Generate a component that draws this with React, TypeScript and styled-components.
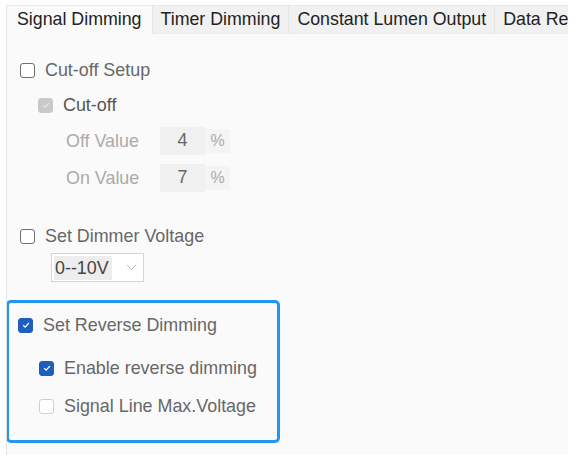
import React from "react";
import styled, { createGlobalStyle } from "styled-components";

const GlobalStyle = createGlobalStyle`
  body {
    margin: 0;
    background: #ffffff;
    font-family: "Liberation Sans", Arial, sans-serif;
  }
`;

const Panel = styled.div`
  box-sizing: border-box;
  margin: 5px 0 0 6px;
  width: 562px;
  height: 450px;
  background: #fafafa;
  border-left: 1px solid #e2e2e2;
  border-top: 1px solid #e8e8e8;
  overflow: hidden;
`;

const TabBar = styled.div`
  display: flex;
  height: 28px;
  white-space: nowrap;
`;

const Tab = styled.div<{ $active?: boolean }>`
  box-sizing: border-box;
  height: 28px;
  line-height: 27px;
  padding: ${(p) => (p.$active ? "0 10px" : "0 8px")};
  font-size: 17.8px;
  color: #222;
  background: ${(p) => (p.$active ? "#fafafa" : "#f1f1f1")};
  border-right: 1px solid #e4e4e4;
  border-bottom: ${(p) => (p.$active ? "none" : "1px solid #ececec")};
  flex-shrink: 0;
`;

const Body = styled.div`
  display: flex;
  flex-direction: column;
  padding-top: 19px;
`;

const CheckRow = styled.label<{ $indent?: number; $gap?: number }>`
  display: flex;
  align-items: center;
  gap: 10px;
  height: 34px;
  padding-left: ${(p) => p.$indent ?? 13}px;
  margin-top: ${(p) => p.$gap ?? 0}px;
  font-size: 17.9px;
`;

const Label = styled.span<{ $tone?: string }>`
  color: ${(p) => p.$tone ?? "#676767"};
`;

const Box = styled.span<{ $state: "off" | "on" | "disabled" | "faint" }>`
  box-sizing: border-box;
  width: 15px;
  height: 15px;
  border-radius: 3px;
  display: flex;
  align-items: center;
  justify-content: center;
  flex-shrink: 0;
  border: 1.5px solid
    ${(p) =>
      p.$state === "on"
        ? "#1d5fbf"
        : p.$state === "disabled"
        ? "#c9c9c9"
        : p.$state === "faint"
        ? "#cfcfcf"
        : "#6f6f6f"};
  background: ${(p) =>
    p.$state === "on" ? "#1d5fbf" : p.$state === "disabled" ? "#c9c9c9" : "#fff"};
`;

const ValueRow = styled.div<{ $gap: number }>`
  display: flex;
  align-items: center;
  height: 30px;
  margin-top: ${(p) => p.$gap}px;
  padding-left: 59px;
  font-size: 17.9px;
`;

const ValueLabel = styled.span`
  width: 94px;
  color: #ababab;
`;

const ValueInput = styled.span`
  box-sizing: border-box;
  width: 45px;
  height: 28px;
  line-height: 26px;
  text-align: center;
  background: #f0f0f0;
  color: #666;
`;

const Unit = styled.span`
  box-sizing: border-box;
  width: 25px;
  height: 24px;
  line-height: 24px;
  text-align: center;
  background: #f4f4f4;
  color: #aaa;
  font-size: 16px;
`;

const Select = styled.div`
  box-sizing: border-box;
  display: flex;
  align-items: center;
  justify-content: space-between;
  margin-left: 44px;
  width: 93px;
  height: 29px;
  padding: 0 6px 0 2px;
  background: #fff;
  border: 1px solid #d4d4d4;
  font-size: 17.9px;
  color: #444;
`;

const SelectText = styled.span`
  background: #ededed;
  padding: 0 3px 0 1px;
  line-height: 24px;
`;

const Group = styled.div`
  box-sizing: border-box;
  margin: 18px 0 0 -1px;
  width: 274px;
  height: 143px;
  border: 3px solid #2196f3;
  border-radius: 5px;
  padding-top: 5px;
  display: flex;
  flex-direction: column;
`;

const Check = ({ color }: { color: string }) => (
  <svg width="10" height="10" viewBox="0 0 10 10">
    <path d="M2.2 5.2 L4.2 7.1 L7.9 3" fill="none" stroke={color} strokeWidth="1.3" />
  </svg>
);

const Chevron = () => (
  <svg width="11" height="7" viewBox="0 0 11 7">
    <path d="M1 1 L5.5 5.5 L10 1" fill="none" stroke="#bdbdbd" strokeWidth="1" />
  </svg>
);

const App = () => {
  const tabs = ["Signal Dimming", "Timer Dimming", "Constant Lumen Output", "Data Record"];
  return (
    <>
      <GlobalStyle />
      <Panel>
        <TabBar>
          {tabs.map((t, i) => (
            <Tab key={t} $active={i === 0}>
              {t}
            </Tab>
          ))}
        </TabBar>
        <Body>
          <CheckRow>
            <Box $state="off" />
            <Label>Cut-off Setup</Label>
          </CheckRow>
          <CheckRow $indent={31} $gap={1}>
            <Box $state="disabled">
              <Check color="#e6e6e6" />
            </Box>
            <Label $tone="#555">Cut-off</Label>
          </CheckRow>
          <ValueRow $gap={4}>
            <ValueLabel>Off Value</ValueLabel>
            <ValueInput>4</ValueInput>
            <Unit>%</Unit>
          </ValueRow>
          <ValueRow $gap={7}>
            <ValueLabel>On Value</ValueLabel>
            <ValueInput>7</ValueInput>
            <Unit>%</Unit>
          </ValueRow>

          <CheckRow $gap={26}>
            <Box $state="off" />
            <Label>Set Dimmer Voltage</Label>
          </CheckRow>
          <Select>
            <SelectText>0--10V</SelectText>
            <Chevron />
          </Select>

          <Group>
            <CheckRow $indent={9}>
              <Box $state="on">
                <Check color="#ffffff" />
              </Box>
              <Label>Set Reverse Dimming</Label>
            </CheckRow>
            <CheckRow $indent={30} $gap={9}>
              <Box $state="on">
                <Check color="#ffffff" />
              </Box>
              <Label>Enable reverse dimming</Label>
            </CheckRow>
            <CheckRow $indent={30} $gap={4}>
              <Box $state="faint" />
              <Label>Signal Line Max.Voltage</Label>
            </CheckRow>
          </Group>
        </Body>
      </Panel>
    </>
  );
};

export default App;
